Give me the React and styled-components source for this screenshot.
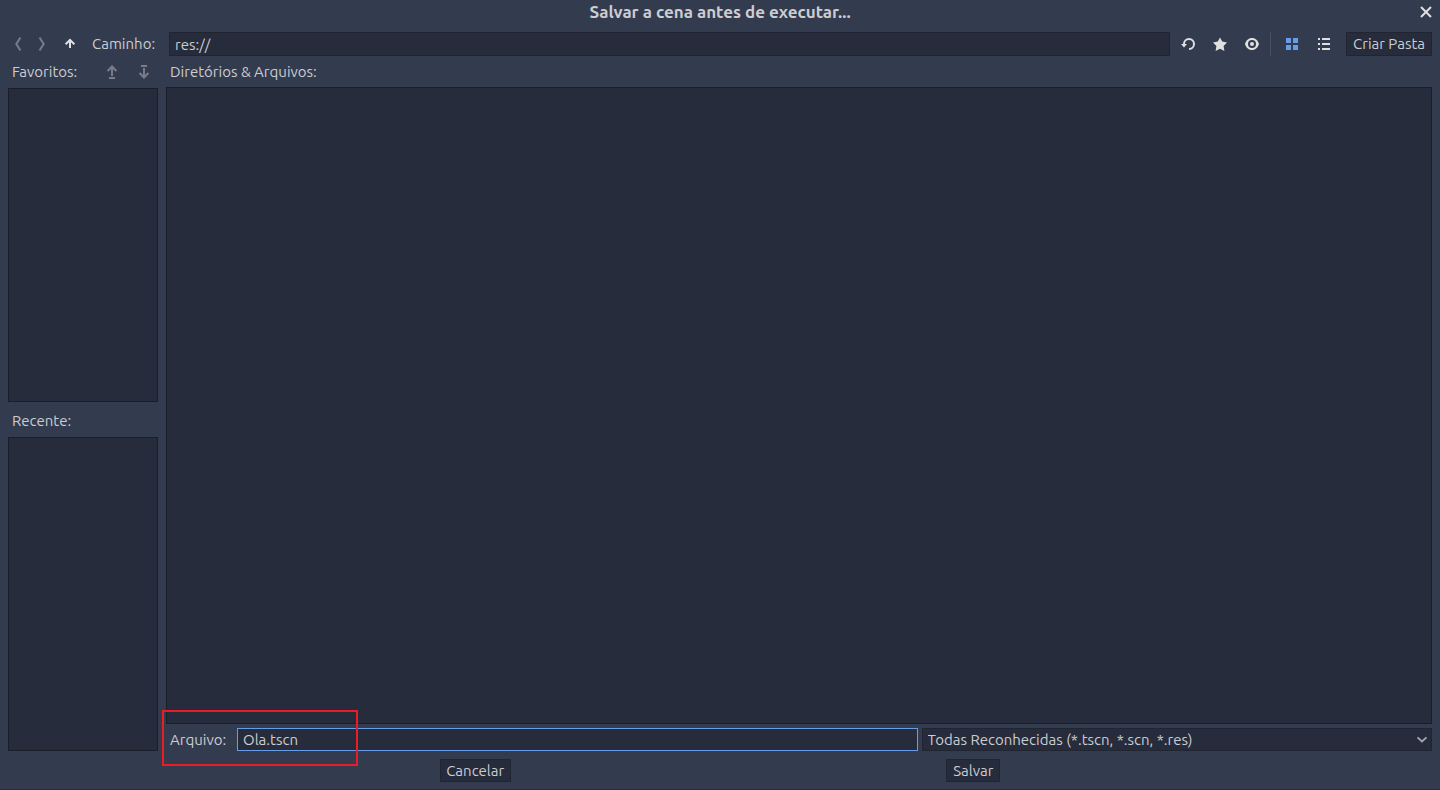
import React from "react";
import styled, { createGlobalStyle, css } from "styled-components";

const color = {
  base: "#333b4f",
  dark: "#262c3b",
  edge: "#202531",
  edgeDeep: "#1a1e28",
  accent: "#699ce8",
  text: "#cccdd1",
  icon: "#e0e0e0",
};

const GlobalStyle = createGlobalStyle`
  *, *::before, *::after { box-sizing: border-box; }
  body { margin: 0; background: ${color.base}; }
  body, button, input, select {
    font-family: Ubuntu, "Noto Sans", sans-serif;
    font-size: 15px;
    line-height: 20px;
    color: ${color.text};
  }
  button, input, select { margin: 0; border-radius: 0; outline: none; }
`;

const Dialog = styled.form`
  display: flex;
  flex-direction: column;
  min-height: 100vh;
  padding: 0 8px 7px;
  background: ${color.base};
  border-bottom: 1px solid ${color.dark};
`;

const TitleBar = styled.header`
  display: grid;
  grid-template-columns: 28px 1fr 28px;
  align-items: center;
  height: 24px;
  margin: 0 -8px 8px;
`;

const Title = styled.h1`
  grid-column: 2;
  margin: 0;
  font-size: 17px;
  line-height: 24px;
  font-weight: 700;
  text-align: center;
`;

const IconButton = styled.button`
  display: flex;
  align-items: center;
  justify-content: center;
  flex: none;
  width: ${(p) => (p.$narrow ? "20px" : "28px")};
  height: 24px;
  padding: 0;
  border: 0;
  background: none;
  color: ${(p) => (p.$active ? color.accent : color.icon)};
  svg { opacity: ${(p) => (p.disabled ? 0.4 : 1)}; }
`;

const Toolbar = styled.div`
  display: flex;
  align-items: center;
  gap: 4px;
`;

const PathLabel = styled.label`
  flex: none;
  width: 77px;
  padding-left: 4px;
`;

const fieldBox = css`
  height: ${(p) => (p.$tall ? "24px" : "23px")};
  padding: 0 5px;
  background: ${color.dark};
  border: 1px solid ${color.edge};
`;

const TextField = styled.input`
  ${fieldBox}
  flex: 1;
  min-width: 0;
  border-color: ${(p) => (p.$focused ? color.accent : color.edge)};
`;

const PushButton = styled.button`
  ${fieldBox}
  flex: none;
  min-width: ${(p) => p.$width};
  padding: 0;
`;

const Separator = styled.span`
  width: 1px;
  height: 24px;
  margin-right: 3px;
  background: #4a5163;
`;

const CreateSlot = styled.div`
  display: flex;
  padding-left: 4px;
`;

const Content = styled.main`
  display: grid;
  grid-template-columns: 150px minmax(0, 1fr);
  gap: 8px;
  flex: 1;
  padding-top: 4px;
`;

const Sidebar = styled.aside`
  display: flex;
  flex-direction: column;
  gap: 8px;
`;

const Section = styled.section`
  display: flex;
  flex-direction: column;
  flex: 1;
  gap: 4px;
`;

const SectionHead = styled.div`
  display: flex;
  align-items: center;
  gap: 4px;
  min-height: ${(p) => (p.$tall ? "24px" : "23px")};
  padding-left: 4px;
`;

const SectionTitle = styled.h2`
  flex: 1;
  margin: 0;
  font-size: 15px;
  line-height: 20px;
  font-weight: 400;
`;

const List = styled.div`
  flex: 1;
  background: ${color.dark};
  border: 1px solid ${color.edgeDeep};
`;

const FileRow = styled.div`
  position: relative;
  display: grid;
  grid-template-columns: 67px minmax(0, 4fr) minmax(0, 3fr);
  gap: 4px;
  align-items: center;
`;

const FileLabel = styled.label`
  padding-left: 4px;
`;

const FilterBox = styled.div`
  position: relative;
  display: flex;
  svg {
    position: absolute;
    right: 4px;
    top: 6px;
    pointer-events: none;
  }
`;

const Filter = styled.select`
  ${fieldBox}
  appearance: none;
  width: 100%;
`;

const Highlight = styled.span`
  position: absolute;
  left: -4px;
  top: -18px;
  width: 196px;
  height: 56px;
  border: 2px solid #ed1c24;
  pointer-events: none;
`;

const Actions = styled.footer`
  display: flex;
  gap: 4px;
  padding-top: 8px;
  &::before, &::after { content: ""; flex: 1; }
`;

const Spacer = styled.span`
  flex: 1;
`;

const Icon = ({ size = 16, children }) => (
  <svg width={size} height={size} viewBox="0 0 16 16" fill="none" stroke="currentColor" strokeWidth="2" aria-hidden="true">
    {children}
  </svg>
);

const CloseIcon = () => <Icon><path d="M3 3l10 10M13 3L3 13" /></Icon>;
const BackIcon = () => <Icon><path d="M10.5 1.5L6.3 8l4.2 6.5" /></Icon>;
const ForwardIcon = () => <Icon><path d="M5.5 1.5L9.7 8l-4.2 6.5" /></Icon>;
const UpIcon = () => <Icon><path d="M8 12V4.5M3.6 8.2L8 4l4.4 4.2" /></Icon>;
const MoveUpIcon = () => <Icon><path d="M8 12V3M3.6 7L8 2.5 12.4 7M5 14h6" /></Icon>;
const MoveDownIcon = () => <Icon><path d="M8 4v9M3.6 9L8 13.5 12.4 9M5 2h6" /></Icon>;
const ReloadIcon = () => (
  <Icon>
    <path d="M4 8a5 5 0 1 1 5 5" />
    <path d="M1 8h6l-3 3.5z" fill="currentColor" stroke="none" />
  </Icon>
);
const StarIcon = () => (
  <Icon>
    <path
      d="M8 1.6l2.2 4 4.8.9-3.4 3.4.8 5L8 12.8l-4.4 2.1.8-5L1 6.5l4.8-.9z"
      fill="currentColor"
      stroke="none"
    />
  </Icon>
);
const EyeIcon = () => (
  <Icon>
    <path
      d="M8 2c3.6 0 6 2.6 7 6-1 3.4-3.4 6-7 6s-6-2.6-7-6c1-3.4 3.4-6 7-6zM8 4a4 4 0 1 0 0 8 4 4 0 0 0 0-8z"
      fill="currentColor"
      fillRule="evenodd"
      stroke="none"
    />
    <circle cx="8" cy="8" r="2" fill="currentColor" stroke="none" />
  </Icon>
);
const GridIcon = () => (
  <Icon><path d="M2 2h5v5H2zM9 2h5v5H9zM2 9h5v5H2zM9 9h5v5H9z" fill="currentColor" stroke="none" /></Icon>
);
const ListIcon = () => <Icon><path d="M2 3h2M6 3h8M2 8h2M6 8h8M2 13h2M6 13h8" /></Icon>;
const ChevronIcon = () => (
  <Icon size={12}><path d="M2 4.5l6 5.5 6-5.5" strokeWidth="2.6" opacity="0.75" /></Icon>
);

export default function App() {
  return (
    <>
      <GlobalStyle />
      <Dialog onSubmit={(e) => e.preventDefault()}>
        <TitleBar>
          <Title>Salvar a cena antes de executar...</Title>
          <IconButton type="button" aria-label="Fechar"><CloseIcon /></IconButton>
        </TitleBar>

        <Toolbar>
          <IconButton type="button" $narrow disabled aria-label="Voltar"><BackIcon /></IconButton>
          <IconButton type="button" $narrow disabled aria-label="Avançar"><ForwardIcon /></IconButton>
          <IconButton type="button" aria-label="Subir"><UpIcon /></IconButton>
          <PathLabel htmlFor="path">Caminho:</PathLabel>
          <TextField id="path" $tall defaultValue="res://" />
          <IconButton type="button" aria-label="Recarregar"><ReloadIcon /></IconButton>
          <IconButton type="button" aria-label="Favoritar"><StarIcon /></IconButton>
          <IconButton type="button" aria-label="Mostrar ocultos"><EyeIcon /></IconButton>
          <Separator />
          <IconButton type="button" $active aria-label="Grade"><GridIcon /></IconButton>
          <IconButton type="button" aria-label="Lista"><ListIcon /></IconButton>
          <CreateSlot>
            <PushButton type="button" $tall $width="86px">Criar Pasta</PushButton>
          </CreateSlot>
        </Toolbar>

        <Content>
          <Sidebar>
            <Section>
              <SectionHead $tall>
                <SectionTitle>Favoritos:</SectionTitle>
                <IconButton type="button" disabled aria-label="Mover para cima"><MoveUpIcon /></IconButton>
                <IconButton type="button" disabled aria-label="Mover para baixo"><MoveDownIcon /></IconButton>
              </SectionHead>
              <List />
            </Section>
            <Section>
              <SectionHead>
                <SectionTitle>Recente:</SectionTitle>
              </SectionHead>
              <List />
            </Section>
          </Sidebar>

          <Section>
            <SectionHead>
              <SectionTitle>Diretórios &amp; Arquivos:</SectionTitle>
            </SectionHead>
            <List />
            <FileRow>
              <FileLabel htmlFor="file">Arquivo:</FileLabel>
              <TextField id="file" $focused defaultValue="Ola.tscn" />
              <FilterBox>
                <Filter aria-label="Filtro">
                  <option>Todas Reconhecidas (*.tscn, *.scn, *.res)</option>
                </Filter>
                <ChevronIcon />
              </FilterBox>
              <Highlight />
            </FileRow>
          </Section>
        </Content>

        <Actions>
          <PushButton type="button" $width="71px">Cancelar</PushButton>
          <Spacer />
          <PushButton type="submit" $width="54px">Salvar</PushButton>
        </Actions>
      </Dialog>
    </>
  );
}
